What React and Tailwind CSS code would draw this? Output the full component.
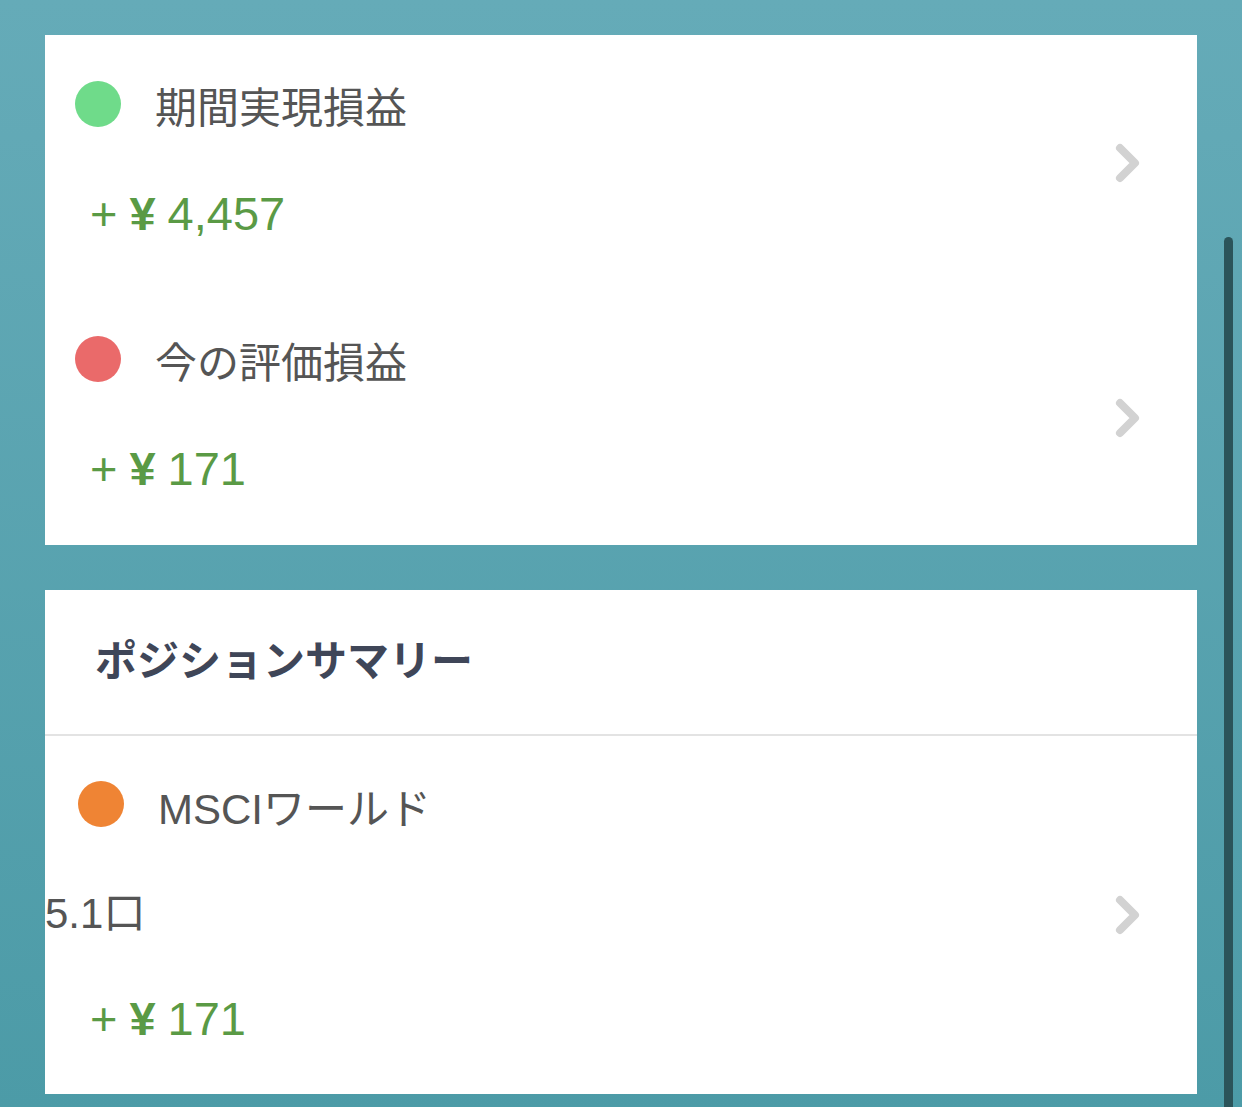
import React from "react";

const FONT = { fontFamily: '"Liberation Sans", "Noto Sans CJK JP", sans-serif' };

function Chevron() {
  return (
    <svg width="30" height="42" viewBox="0 0 30 42" className="shrink-0">
      <polyline
        points="8,6 23,21 8,36"
        fill="none"
        stroke="#d2d2d2"
        strokeWidth="8"
        strokeLinecap="round"
        strokeLinejoin="round"
      />
    </svg>
  );
}

function Value({ amount }) {
  return (
    <div className="pl-[45px] text-[47px] leading-[60px] text-[#5a9a45] flex items-baseline">
      <span>+</span>
      <span className="ml-[12px] font-bold">¥</span>
      <span className="ml-[12px]">{amount}</span>
    </div>
  );
}

function PLRow({ color, title, amount }) {
  return (
    <div className="h-[255px] flex items-center justify-between pr-[55px]">
      <div className="flex flex-col">
        <div className="flex items-start pl-[30px]">
          <div className={`w-[46px] h-[46px] rounded-full ${color}`} />
          <div className="ml-[34px] text-[42px] leading-[56px] text-[#555555]">{title}</div>
        </div>
        <div className="mt-[47px]">
          <Value amount={amount} />
        </div>
      </div>
      <Chevron />
    </div>
  );
}

export default function App() {
  return (
    <div
      className="relative h-[1107px] overflow-hidden bg-gradient-to-b from-[#65abb8] to-[#4c9ba7] pt-[35px]"
      style={FONT}
    >
      <div className="mx-[45px] bg-white flex flex-col">
        <PLRow color="bg-[#6fdb8a]" title="期間実現損益" amount="4,457" />
        <PLRow color="bg-[#ea6a6a]" title="今の評価損益" amount="171" />
      </div>

      <div className="mx-[45px] mt-[45px] bg-white flex flex-col">
        <div className="h-[144px] flex items-center pl-[50px]">
          <div className="text-[42px] font-bold leading-[56px] text-[#3f4658]">ポジションサマリー</div>
        </div>
        <div className="h-[2px] bg-[#e3e3e3]" />
        <div className="flex items-center justify-between pr-[55px] pt-[45px] pb-[45px]">
          <div className="flex flex-col">
            <div className="flex items-start pl-[33px]">
              <div className="w-[46px] h-[46px] rounded-full bg-[#ef8434]" />
              <div className="ml-[34px] mt-[1px] text-[42px] leading-[56px] text-[#555555]">MSCIワールド</div>
            </div>
            <div className="mt-[48px] text-[42px] leading-[56px] text-[#555555]">5.1口</div>
            <div className="mt-[47px]">
              <Value amount="171" />
            </div>
          </div>
          <Chevron />
        </div>
      </div>

      <div className="absolute left-[1224px] top-[237px] w-[9px] h-[900px] rounded-full bg-[#2b545a]" />
    </div>
  );
}
